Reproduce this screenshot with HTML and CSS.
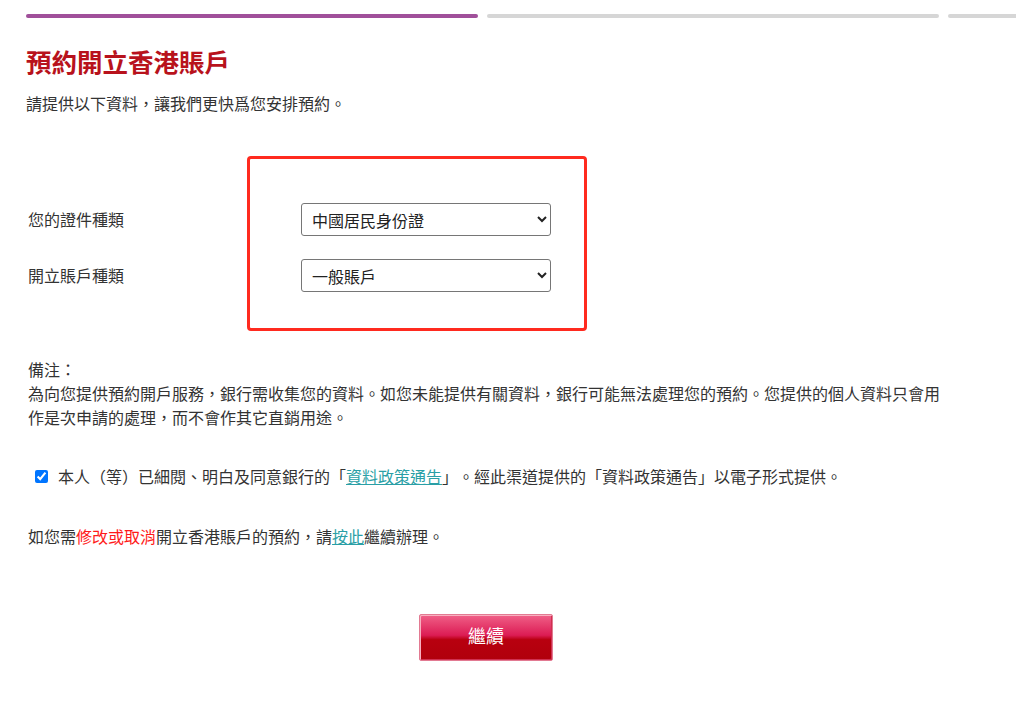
FILE: index.html
```html
<!DOCTYPE html>
<html lang="zh-Hant">
<head>
  <meta charset="UTF-8">
  <meta name="viewport" content="width=device-width, initial-scale=1.0">
  <title>預約開立香港賬戶</title>
  <link rel="stylesheet" href="styles.css">
</head>
<body>
  <!-- 進度條 -->
  <div class="progress">
    <span class="step active"></span>
    <span class="step"></span>
    <span class="step"></span>
  </div>

  <div class="page">
    <h1>預約開立香港賬戶</h1>
    <p class="intro">請提供以下資料，讓我們更快爲您安排預約。</p>

    <!-- 選擇證件及賬戶類型 -->
    <form class="apply-form">
      <div class="highlight"></div>
      <div class="row">
        <label for="idType">您的證件種類</label>
        <select id="idType">
          <option>中國居民身份證</option>
          <option>香港身份證</option>
          <option>護照</option>
        </select>
      </div>
      <div class="row">
        <label for="accType">開立賬戶種類</label>
        <select id="accType">
          <option>一般賬戶</option>
          <option>綜合賬戶</option>
        </select>
      </div>
    </form>

    <div class="notes">
      備注：<br>
      為向您提供預約開戶服務，銀行需收集您的資料。如您未能提供有關資料，銀行可能無法處理您的預約。您提供的個人資料只會用<br>
      作是次申請的處理，而不會作其它直銷用途。
    </div>

    <label class="agree">
      <input type="checkbox" checked>
      <span>本人（等）已細閱、明白及同意銀行的「<a href="#">資料政策通告</a>」。經此渠道提供的「資料政策通告」以電子形式提供。</span>
    </label>

    <p class="amend">如您需<span class="warn">修改或取消</span>開立香港賬戶的預約，請<a href="#">按此</a>繼續辦理。</p>

    <div class="actions">
      <button type="button" class="btn-next">繼續</button>
    </div>
  </div>
</body>
</html>
```

FILE: styles.css
```css
/* 基本 */
body {
  margin: 0;
  font-family: "Noto Sans CJK TC", "Noto Sans", sans-serif;
  font-size: 16px;
  color: #333;
  background-color: #fff;
  overflow: hidden;
  text-spacing-trim: space-all;
}

a {
  color: #2a9fa6;
  text-decoration: underline;
}

/* 進度條 */
.progress {
  display: flex;
  gap: 9px;
  margin: 14px 0 0 26px;
  overflow: hidden;
}

.progress .step {
  flex: 0 0 452px;
  height: 4px;
  border-radius: 2px;
  background-color: #d6d6d6;
}

.progress .step.active {
  background-color: #a0509a;
}

/* 內容 */
.page {
  width: 920px;
  padding-left: 26px;
}

h1 {
  margin: 27px 0 0;
  font-size: 25.5px;
  line-height: 32px;
  font-weight: bold;
  color: #b8121c;
}

.intro {
  margin: 14px 0 0;
  line-height: 24px;
}

/* 表單 */
.apply-form {
  position: relative;
  margin-top: 41px;
  padding: 47px 0 39px 2px;
  display: flex;
  flex-direction: column;
  gap: 23px;
}

.apply-form .highlight {
  position: absolute;
  left: 221px;
  top: 0;
  width: 334px;
  height: 169px;
  border: 3px solid #ff2a1f;
  border-radius: 4px;
}

.apply-form .row {
  display: flex;
  align-items: center;
}

.apply-form label {
  width: 273px;
  margin-top: -2px;
}

.apply-form select {
  width: 250px;
  height: 33px;
  padding: 0 6px;
  font-family: inherit;
  font-size: 16px;
  color: #222;
  background-color: #fff;
  border: 1px solid #767676;
  border-radius: 3px;
}

/* 備注 */
.notes {
  margin-top: 26px;
  padding-left: 2px;
  line-height: 24px;
}

.agree {
  display: flex;
  align-items: center;
  margin-top: 35px;
  padding-left: 8px;
  line-height: 24px;
}

.agree input {
  width: 13px;
  height: 13px;
  margin: 0 10px 0 1px;
}

.amend {
  margin: 36px 0 0;
  padding-left: 2px;
  line-height: 24px;
}

.amend .warn {
  color: #ff1a1a;
}

/* 按鈕 */
.actions {
  display: flex;
  justify-content: center;
  margin-top: 66px;
}

.btn-next {
  width: 134px;
  height: 47px;
  padding-bottom: 6px;
  font-family: inherit;
  font-size: 18px;
  color: #fff;
  border: 1px solid #e27a92;
  border-radius: 2px;
  background: linear-gradient(#f06088 0%, #dc1c54 45%, #b8000f 55%, #b0000c 100%);
  box-shadow: inset 1px 1px 0 #f8b0c0, inset -1px -1px 0 #d03050;
  cursor: pointer;
}
```
